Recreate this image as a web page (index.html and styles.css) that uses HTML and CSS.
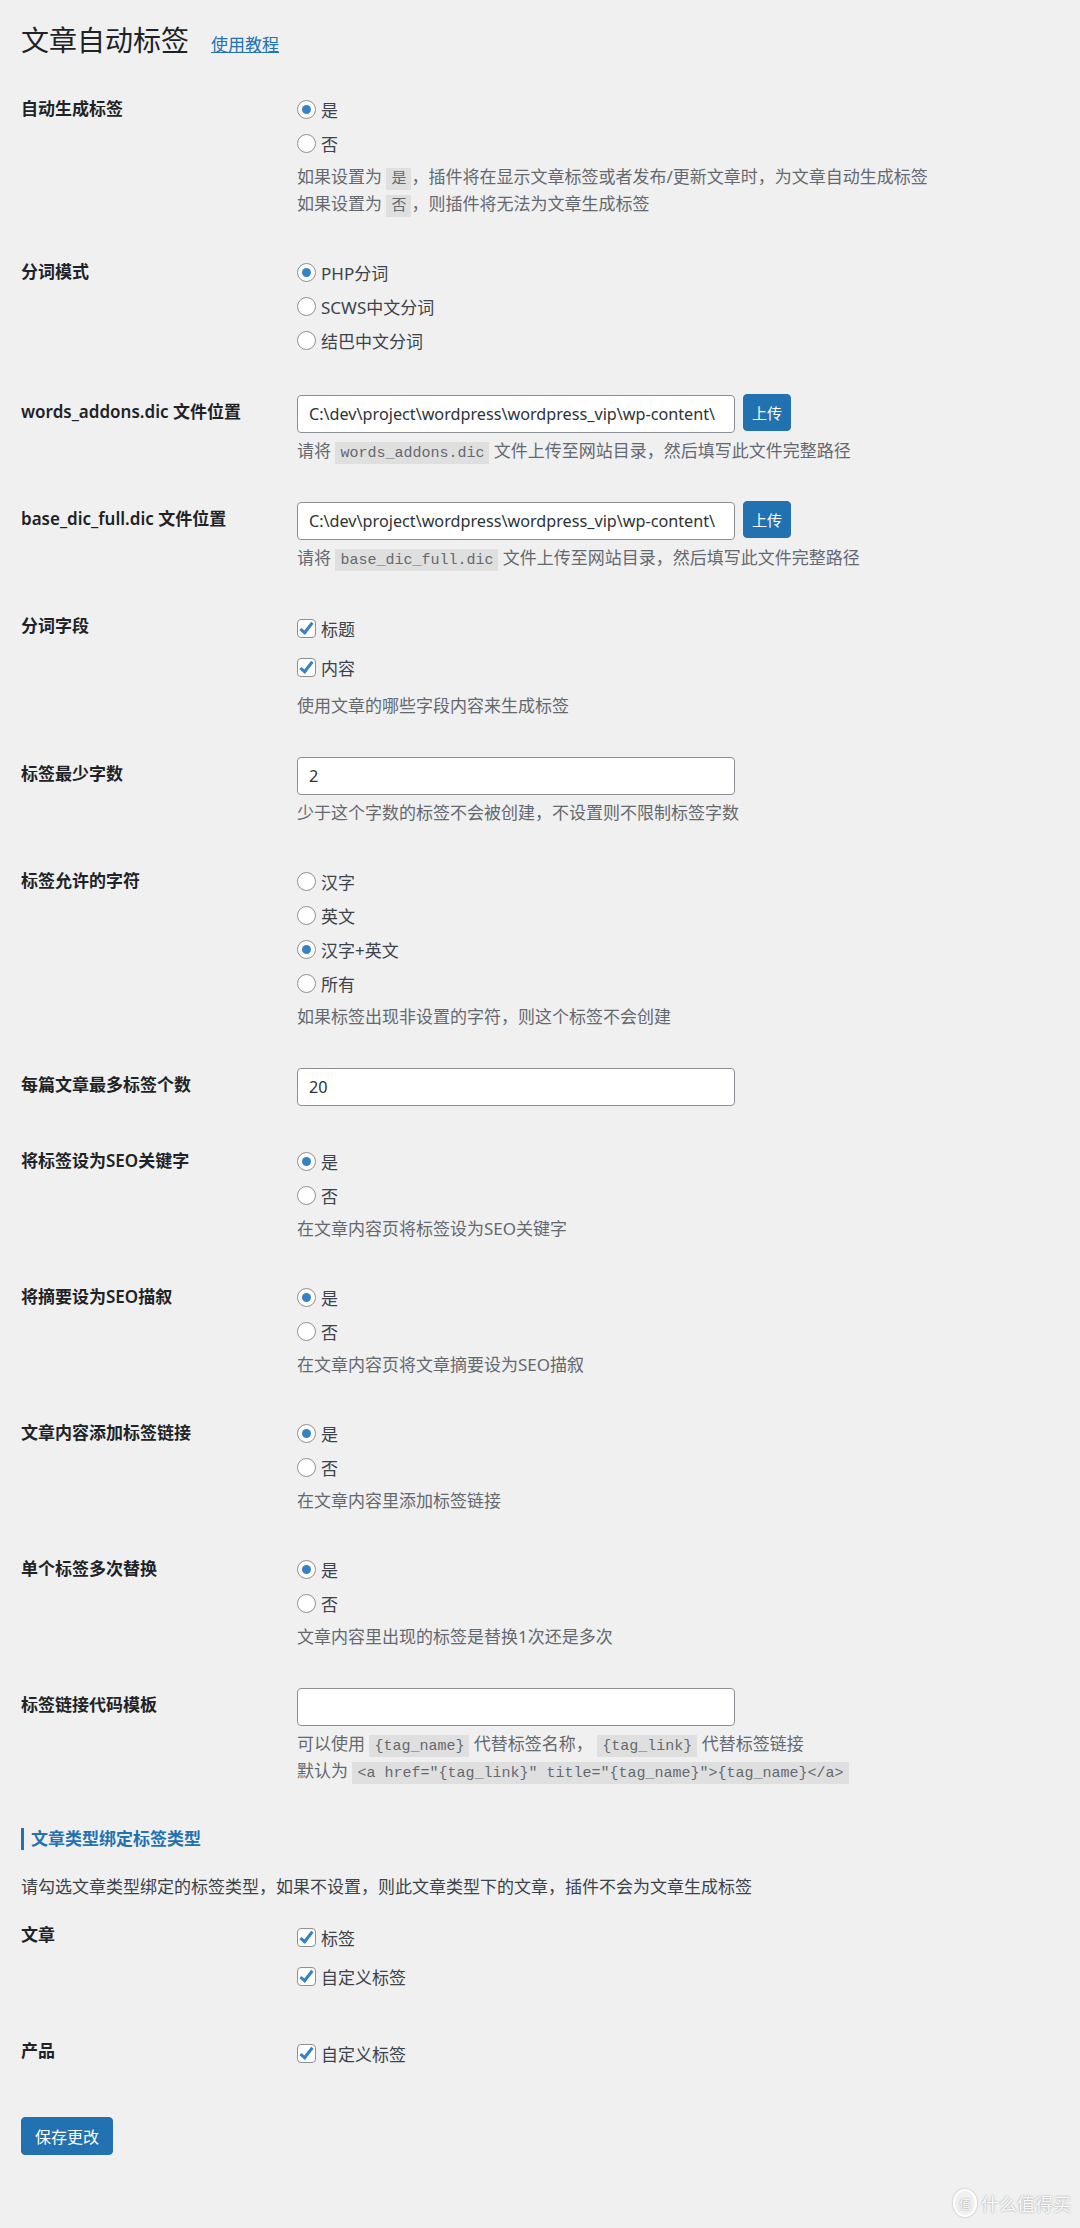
FILE: index.html
```html
<!DOCTYPE html>
<html>
<head>
  <meta charset="utf-8">
  <title>文章自动标签</title>
  <link rel="stylesheet" href="styles.css">
</head>
<body>
  <div class="wrap">
    <h1 class="page-title">文章自动标签 <a class="doc-link" href="#">使用教程</a></h1>

    <form>
      <div class="form-table">
        <div class="row">
          <div class="label">自动生成标签</div>
          <div class="field">
            <label class="option"><input type="radio" name="auto_tag" checked>是</label>
            <label class="option"><input type="radio" name="auto_tag">否</label>
            <p class="desc">如果设置为 <code>是</code>，插件将在显示文章标签或者发布/更新文章时，为文章自动生成标签<br>如果设置为 <code>否</code>，则插件将无法为文章生成标签</p>
          </div>
        </div>

        <div class="row">
          <div class="label">分词模式</div>
          <div class="field">
            <label class="option"><input type="radio" name="split_mode" checked>PHP分词</label>
            <label class="option"><input type="radio" name="split_mode">SCWS中文分词</label>
            <label class="option"><input type="radio" name="split_mode">结巴中文分词</label>
          </div>
        </div>

        <div class="row">
          <div class="label label-input">words_addons.dic 文件位置</div>
          <div class="field">
            <div class="input-group">
              <input class="text-input" type="text" value="C:\dev\project\wordpress\wordpress_vip\wp-content\">
              <button class="button button-upload" type="button">上传</button>
            </div>
            <p class="desc desc-input">请将 <code>words_addons.dic</code> 文件上传至网站目录，然后填写此文件完整路径</p>
          </div>
        </div>

        <div class="row">
          <div class="label label-input">base_dic_full.dic 文件位置</div>
          <div class="field">
            <div class="input-group">
              <input class="text-input" type="text" value="C:\dev\project\wordpress\wordpress_vip\wp-content\">
              <button class="button button-upload" type="button">上传</button>
            </div>
            <p class="desc desc-input">请将 <code>base_dic_full.dic</code> 文件上传至网站目录，然后填写此文件完整路径</p>
          </div>
        </div>

        <div class="row">
          <div class="label">分词字段</div>
          <div class="field">
            <label class="option option-box"><input type="checkbox" checked>标题</label>
            <label class="option option-box"><input type="checkbox" checked>内容</label>
            <p class="desc desc-box">使用文章的哪些字段内容来生成标签</p>
          </div>
        </div>

        <div class="row">
          <div class="label label-input">标签最少字数</div>
          <div class="field">
            <input class="text-input" type="text" value="2">
            <p class="desc desc-input">少于这个字数的标签不会被创建，不设置则不限制标签字数</p>
          </div>
        </div>

        <div class="row">
          <div class="label">标签允许的字符</div>
          <div class="field">
            <label class="option"><input type="radio" name="allowed_chars">汉字</label>
            <label class="option"><input type="radio" name="allowed_chars">英文</label>
            <label class="option"><input type="radio" name="allowed_chars" checked>汉字+英文</label>
            <label class="option"><input type="radio" name="allowed_chars">所有</label>
            <p class="desc">如果标签出现非设置的字符，则这个标签不会创建</p>
          </div>
        </div>

        <div class="row">
          <div class="label label-input">每篇文章最多标签个数</div>
          <div class="field">
            <input class="text-input" type="text" value="20">
          </div>
        </div>

        <div class="row">
          <div class="label">将标签设为SEO关键字</div>
          <div class="field">
            <label class="option"><input type="radio" name="seo_keywords" checked>是</label>
            <label class="option"><input type="radio" name="seo_keywords">否</label>
            <p class="desc">在文章内容页将标签设为SEO关键字</p>
          </div>
        </div>

        <div class="row">
          <div class="label">将摘要设为SEO描叙</div>
          <div class="field">
            <label class="option"><input type="radio" name="seo_desc" checked>是</label>
            <label class="option"><input type="radio" name="seo_desc">否</label>
            <p class="desc">在文章内容页将文章摘要设为SEO描叙</p>
          </div>
        </div>

        <div class="row">
          <div class="label">文章内容添加标签链接</div>
          <div class="field">
            <label class="option"><input type="radio" name="add_links" checked>是</label>
            <label class="option"><input type="radio" name="add_links">否</label>
            <p class="desc">在文章内容里添加标签链接</p>
          </div>
        </div>

        <div class="row">
          <div class="label">单个标签多次替换</div>
          <div class="field">
            <label class="option"><input type="radio" name="multi_replace" checked>是</label>
            <label class="option"><input type="radio" name="multi_replace">否</label>
            <p class="desc">文章内容里出现的标签是替换1次还是多次</p>
          </div>
        </div>

        <div class="row">
          <div class="label label-input">标签链接代码模板</div>
          <div class="field">
            <input class="text-input" type="text" value="">
            <p class="desc desc-input">可以使用 <code>{tag_name}</code> 代替标签名称， <code>{tag_link}</code> 代替标签链接<br>默认为 <code>&lt;a href="{tag_link}" title="{tag_name}"&gt;{tag_name}&lt;/a&gt;</code></p>
          </div>
        </div>
      </div>

      <h3 class="section-title">文章类型绑定标签类型</h3>
      <p class="section-intro">请勾选文章类型绑定的标签类型，如果不设置，则此文章类型下的文章，插件不会为文章生成标签</p>

      <div class="form-table">
        <div class="row">
          <div class="label">文章</div>
          <div class="field">
            <label class="option option-box"><input type="checkbox" checked>标签</label>
            <label class="option option-box"><input type="checkbox" checked>自定义标签</label>
          </div>
        </div>
        <div class="row">
          <div class="label">产品</div>
          <div class="field">
            <label class="option option-box"><input type="checkbox" checked>自定义标签</label>
          </div>
        </div>
      </div>

      <p class="submit"><button class="button button-save" type="submit">保存更改</button></p>
    </form>
  </div>

  <div class="watermark"><span class="watermark-logo">值</span>什么值得买</div>
</body>
</html>
```

FILE: styles.css
```css
body {
  margin: 0;
  min-height: 2228px;
  position: relative;
  background: #f0f0f1;
  color: #3c434a;
  font-family: "Noto Sans", "Noto Sans CJK SC", sans-serif;
  font-size: 17px;
}

.wrap {
  padding: 0 21px;
}

.page-title {
  display: flex;
  align-items: baseline;
  gap: 22px;
  margin: 22px 0 0;
  font-size: 28px;
  font-weight: 400;
  line-height: 36px;
  color: #1d2327;
}

.doc-link {
  font-size: 17px;
  color: #2271b1;
}

.form-table {
  margin-top: 11px;
}

.row {
  display: grid;
  grid-template-columns: 276px 1fr;
}

.label {
  padding-top: 24px;
  line-height: 22px;
  font-weight: 600;
  color: #1d2327;
}

.field {
  padding: 18px 0 20px;
}

.option {
  display: flex;
  align-items: center;
  gap: 5px;
  height: 34px;
  color: #3c434a;
}

.option-box {
  height: 39px;
}

/* radios and checkboxes drawn the WordPress admin way */
.option input {
  appearance: none;
  display: grid;
  place-content: center;
  width: 19px;
  height: 19px;
  margin: 0;
  background: #fff;
  border: 1px solid #8c8f94;
  box-sizing: border-box;
  flex: none;
}

.option input[type="radio"] {
  border-radius: 50%;
}

.option input[type="radio"]:checked::before {
  content: "";
  width: 9px;
  height: 9px;
  border-radius: 50%;
  background: #3582c4;
}

.option input[type="checkbox"] {
  border-radius: 4px;
}

.option input[type="checkbox"]:checked::before {
  content: "";
  width: 4px;
  height: 11px;
  margin-top: -3px;
  border: solid #3582c4;
  border-width: 0 3px 3px 0;
  transform: rotate(38deg);
}

.desc {
  margin: 3px 0 0;
  line-height: 27px;
  color: #646970;
}

.desc-input {
  margin-top: 4px;
}

.desc-box {
  margin-top: 5px;
}

code {
  padding: 3px 5px 2px;
  background: rgba(0, 0, 0, 0.07);
  font-family: "Liberation Mono", "Noto Sans CJK SC", monospace;
  font-size: 15px;
  line-height: 1;
}

.input-group {
  display: flex;
  align-items: flex-start;
  gap: 8px;
}

.text-input {
  display: block;
  width: 438px;
  height: 38px;
  padding: 0 10px 0 11px;
  box-sizing: border-box;
  background: #fff;
  border: 1px solid #8c8f94;
  border-radius: 4px;
  color: #2c3338;
  font-family: inherit;
  font-size: 16.2px;
}

.button {
  background: #2271b1;
  border: 1px solid #2271b1;
  border-radius: 4px;
  color: #fff;
  font-family: inherit;
  cursor: pointer;
}

.button-upload {
  height: 37px;
  margin-top: -1px;
  padding: 0 8px;
  font-size: 15px;
}

.section-title {
  margin: 24px 0 0;
  padding-left: 7px;
  border-left: 3px solid #2271b1;
  font-size: 17px;
  font-weight: 700;
  line-height: 22px;
  color: #2271b1;
}

.section-intro {
  margin: 23px 0 0;
  line-height: 27px;
}

.section-intro + .form-table {
  margin-top: 0;
}

.submit {
  margin: 24px 0 0;
}

.button-save {
  height: 38px;
  padding: 0 13px;
  font-size: 16px;
}

.watermark {
  position: absolute;
  right: 9px;
  bottom: 11px;
  display: flex;
  align-items: center;
  gap: 4px;
  color: rgba(255, 255, 255, 0.95);
  font-family: "Noto Sans CJK SC", sans-serif;
  font-size: 18px;
  text-shadow: 0 0 2px rgba(0, 0, 0, 0.4);
}

.watermark-logo {
  display: grid;
  place-content: center;
  width: 20px;
  height: 24px;
  border: 2px solid rgba(255, 255, 255, 0.95);
  border-radius: 50%;
  font-size: 12px;
  box-shadow: 0 0 2px rgba(0, 0, 0, 0.35);
}
```
